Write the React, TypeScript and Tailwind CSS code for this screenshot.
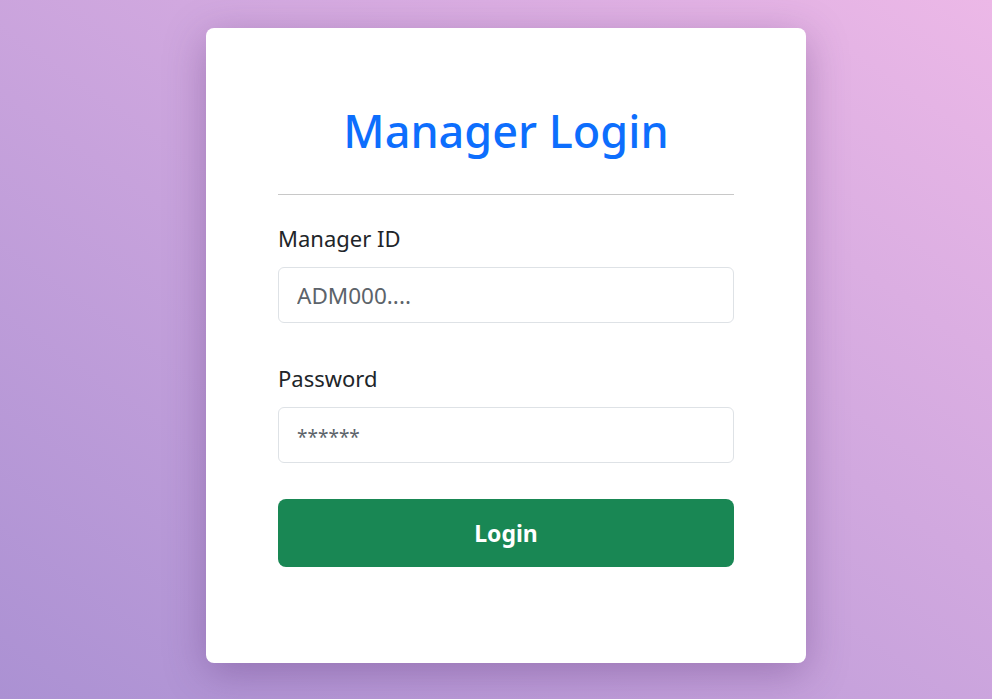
import React from 'react';

const LoginCard: React.FC = () => {
  return (
    <div
      className="min-h-screen w-full flex justify-center pt-[28px] pl-[20px] bg-gradient-to-tr from-[#ab91d3] to-[#ecb8e7]"
      style={{ fontFamily: '"Noto Sans", "Open Sans", sans-serif' }}
    >
      <div className="w-[600px] h-[635px] bg-white rounded-lg shadow-[0_10px_40px_rgba(80,40,110,0.35)] px-[72px] pt-[74px]">
        {/* Header */}
        <h1 className="text-center text-[45px] leading-[58px] text-[#0d6efd] font-medium">Manager Login</h1>
        <hr className="mt-[34px] border-t border-[#c8c8c8]" />

        {/* Form */}
        <form className="flex flex-col" onSubmit={(e) => e.preventDefault()}>
          <label className="mt-[27px] text-[22px] leading-[33px] text-[#212529]">Manager ID</label>
          <input
            type="text"
            placeholder="ADM000...."
            className="mt-[12px] h-[56px] w-full rounded-md border border-[#dee2e6] px-[18px] text-[22.5px] text-[#212529] placeholder:text-[#5c636a] outline-none"
          />

          <label className="mt-[39px] text-[22px] leading-[33px] text-[#212529]">Password</label>
          <input
            type="password"
            placeholder="******"
            className="mt-[12px] h-[56px] w-full rounded-md border border-[#dee2e6] px-[18px] text-[22.5px] text-[#212529] placeholder:text-[19px] placeholder:text-[#5c636a] outline-none"
          />

          <button
            type="submit"
            className="mt-[36px] h-[68px] w-full rounded-lg bg-[#198754] text-white text-[23px] font-bold"
          >
            Login
          </button>
        </form>
      </div>
    </div>
  );
};

export default function App() {
  return <LoginCard />;
}
